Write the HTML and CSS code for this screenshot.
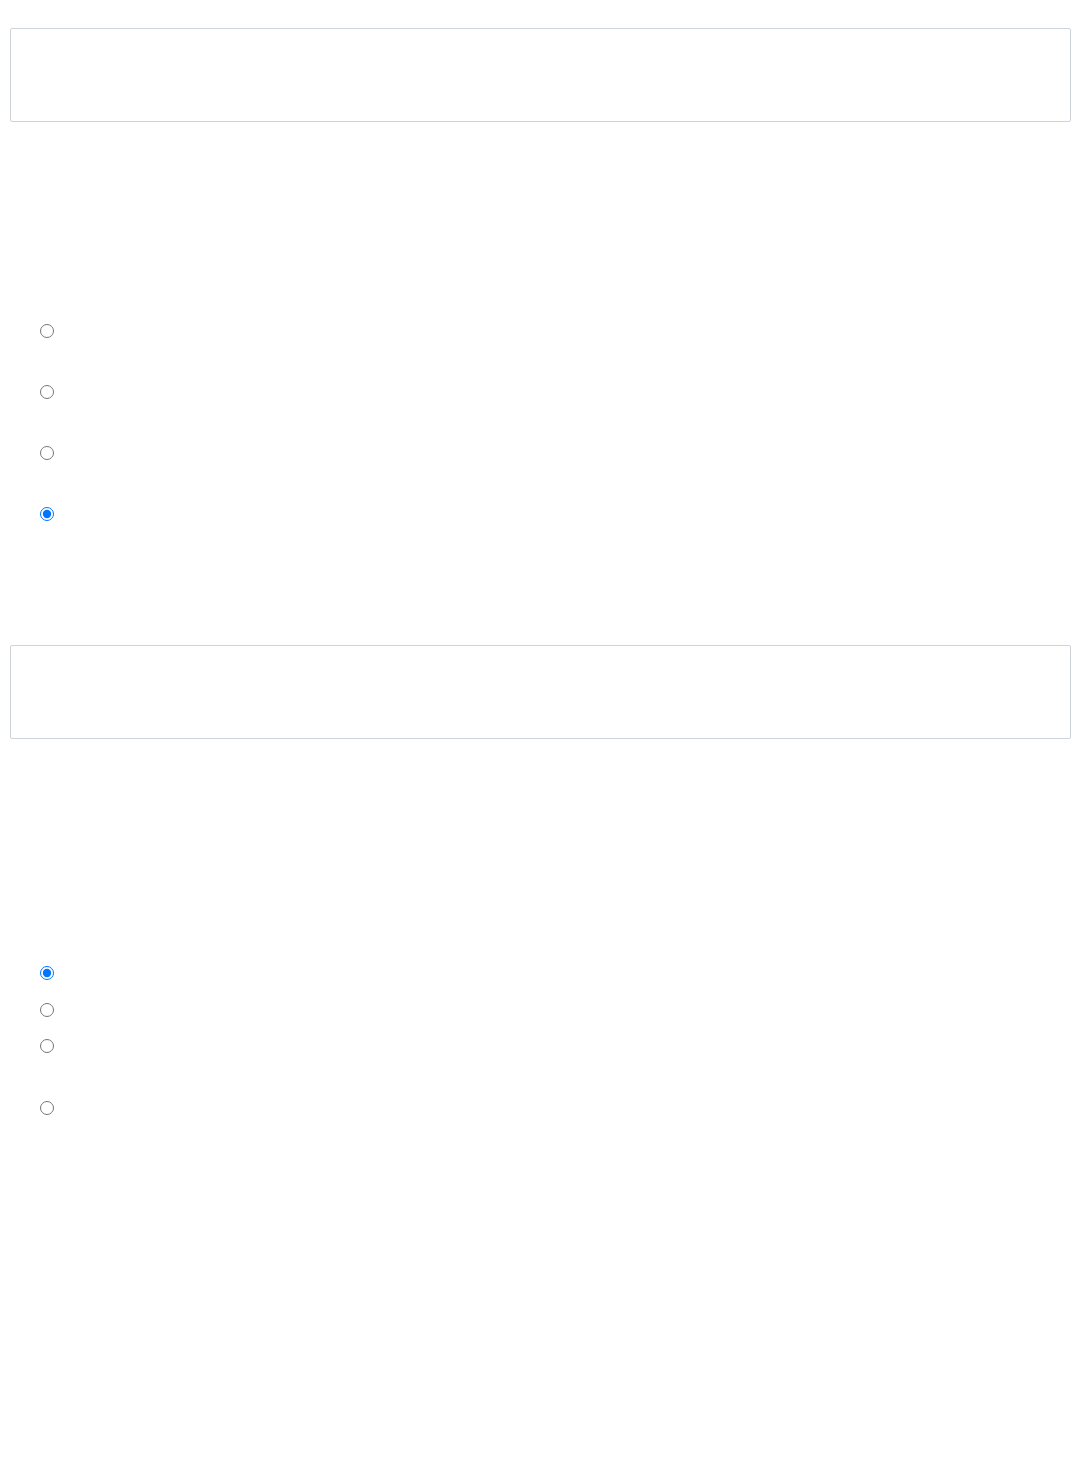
FILE: index.html
```html
<!DOCTYPE html>
<html lang="en">
<head>
<meta charset="utf-8">
<title>Form</title>
<link rel="stylesheet" href="styles.css">
</head>
<body>
<div class="page">
  <div class="field"></div>
  <div class="group group-a">
    <label class="opt row-a"><input type="radio" name="a"></label>
    <label class="opt row-a"><input type="radio" name="a"></label>
    <label class="opt row-a"><input type="radio" name="a"></label>
    <label class="opt row-a"><input type="radio" name="a" checked></label>
  </div>
  <div class="field field-b"></div>
  <div class="group group-b">
    <label class="opt row-b1"><input type="radio" name="b" checked></label>
    <label class="opt row-b2"><input type="radio" name="b"></label>
    <label class="opt row-b3"><input type="radio" name="b"></label>
    <label class="opt row-b4"><input type="radio" name="b"></label>
  </div>
</div>
</body>
</html>
```
FILE: styles.css
```css
html, body {
  margin: 0;
  padding: 0;
  background: #ffffff;
  font-family: "Liberation Sans", Arial, sans-serif;
}
.page {
  padding: 28px 8px 0 10px;
  display: flex;
  flex-direction: column;
  min-height: 1480px;
  box-sizing: border-box;
}
.field {
  height: 94px;
  box-sizing: border-box;
  border: 1px solid #ced4da;
  border-radius: 2px;
  background: #ffffff;
}
.group {
  display: flex;
  flex-direction: column;
}
.group-a {
  margin-top: 202px;
}
.field-b {
  margin-top: 77px;
}
.group-b {
  margin-top: 227px;
}
.opt {
  display: flex;
  align-items: flex-start;
  padding-left: 30px;
}
.opt input {
  margin: 0;
  width: 14px;
  height: 14px;
}
.row-a { height: 61px; }
.row-b1 { height: 37px; }
.row-b2 { height: 36px; }
.row-b3 { height: 62px; }
.row-b4 { height: 40px; }
```
